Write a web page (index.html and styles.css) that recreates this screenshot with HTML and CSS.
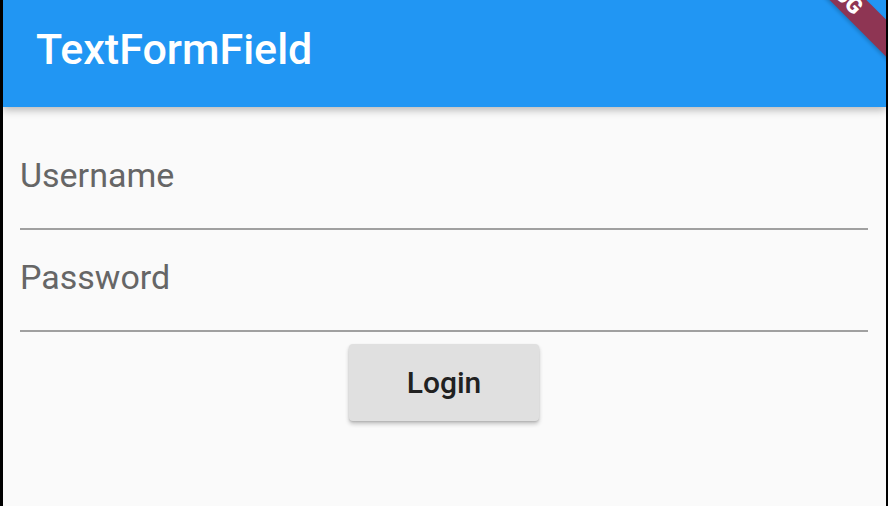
FILE: index.html
```html
<!DOCTYPE html>
<html lang="en">

<head>
    <meta charset="UTF-8" />
    <meta name="viewport" content="width=device-width, initial-scale=1.0" />
    <title>TextFormField</title>
    <link rel="stylesheet" href="styles.css">
</head>

<body>
    <div class="app">
        <header class="app-bar">
            <h1>TextFormField</h1>
        </header>

        <form class="login-form">
            <div class="field">
                <input type="text" placeholder="Username" />
            </div>
            <div class="field">
                <input type="password" placeholder="Password" />
            </div>
            <div class="actions">
                <button type="button" class="raised">Login</button>
            </div>
        </form>

        <div class="debug-banner">DEBUG</div>
    </div>
</body>

</html>
```

FILE: styles.css
```css
* {
    box-sizing: border-box;
}

body {
    margin: 0;
    background-color: #000;
    font-family: Roboto, 'Noto Sans', sans-serif;
    height: 506px;
    overflow: hidden;
}

.app {
    position: relative;
    margin: 0 2px 0 3px;
    height: 506px;
    background-color: #fafafa;
    overflow: hidden;
}

.app-bar {
    position: relative;
    z-index: 1;
    height: 107px;
    background-color: #2196f3;
    box-shadow: 0 3px 8px rgba(0, 0, 0, 0.28);
    padding: 24px 0 0 33px;
}

.app-bar h1 {
    margin: 0;
    color: #fff;
    font-size: 43px;
    font-weight: 500;
    line-height: 50px;
}

.login-form {
    padding: 21px 18px 0 17px;
}

.field {
    padding: 27px 0 33px;
    border-bottom: 2px solid #a0a0a0;
}

.field input {
    display: block;
    width: 100%;
    padding: 0;
    border: none;
    outline: none;
    background: none;
    font-family: inherit;
    font-size: 34px;
    line-height: 40px;
    height: 40px;
    color: #212121;
}

.field input::placeholder {
    color: #666;
}

.actions {
    display: flex;
    justify-content: center;
    padding-top: 12px;
}

.raised {
    width: 190px;
    height: 77px;
    border: none;
    border-radius: 4px;
    background-color: #e0e0e0;
    box-shadow: 0 3px 4px rgba(0, 0, 0, 0.22), 0 1px 2px rgba(0, 0, 0, 0.12);
    font-family: inherit;
    font-size: 30px;
    font-weight: 500;
    color: #212121;
}

.debug-banner {
    position: absolute;
    z-index: 2;
    left: 731px;
    top: -27px;
    width: 200px;
    height: 26px;
    transform: rotate(45deg);
    background-color: #8e3553;
    box-shadow: 0 2px 4px rgba(0, 0, 0, 0.2);
    color: #fff;
    font-size: 22px;
    font-weight: 900;
    line-height: 26px;
    text-align: center;
}
```
